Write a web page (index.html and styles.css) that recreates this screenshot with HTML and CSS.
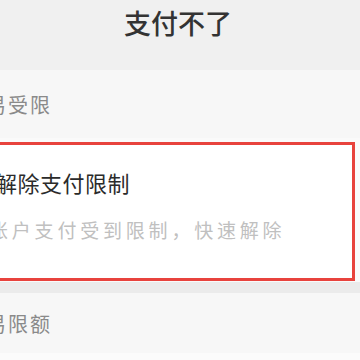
FILE: index.html
```html
<!DOCTYPE html>
<html lang="zh-CN">
<head>
    <meta charset="UTF-8">
    <meta name="viewport" content="width=device-width, initial-scale=1.0">
    <title>支付不了</title>
    <link rel="stylesheet" href="styles.css">
</head>
<body>
    <div class="topbar">
        <h1>支付不了</h1>
    </div>
    <div class="list">
        <div class="group-label">交易受限</div>
        <div class="item highlight">
            <div class="item-title">解除支付限制</div>
            <div class="item-desc">账户支付受到限制，快速解除</div>
        </div>
        <div class="divider"></div>
        <div class="group-label short">交易限额</div>
    </div>
</body>
</html>
```

FILE: styles.css
```css
body {
    margin: 0;
    font-family: "Noto Sans CJK SC", "Noto Sans", sans-serif;
    background-color: #fbfbfb;
    color: #333;
    overflow: hidden;
}
.topbar {
    height: 70px;
    background-color: #f0f0f0;
    display: flex;
    justify-content: center;
}
.topbar h1 {
    margin: 6px 0 0 -4px;
    font-size: 27px;
    line-height: 34px;
    font-weight: 500;
    color: #333;
}
.list {
    margin-left: -40px;
    background-color: #fafafa;
}
.group-label {
    height: 68px;
    display: flex;
    align-items: center;
    padding-left: 4px;
    font-size: 20px;
    letter-spacing: 2px;
    color: #8a8a8a;
    background-color: #f7f7f7;
}
.group-label.short {
    height: 60px;
}
.item {
    background-color: #fff;
}
.highlight {
    margin: 4px 5px 1px 0;
    border: 3px solid #e8433d;
    padding: 22px 0 35px;
}
.item-title {
    padding-left: 32px;
    font-size: 22px;
    line-height: 30px;
    letter-spacing: 0.5px;
    color: #2b2b2b;
}
.item-desc {
    margin-top: 20px;
    padding-left: 26px;
    font-size: 19px;
    line-height: 26px;
    letter-spacing: 3.8px;
    color: #c0c0c0;
}
.divider {
    height: 11px;
    background-color: #ebebeb;
}
```
